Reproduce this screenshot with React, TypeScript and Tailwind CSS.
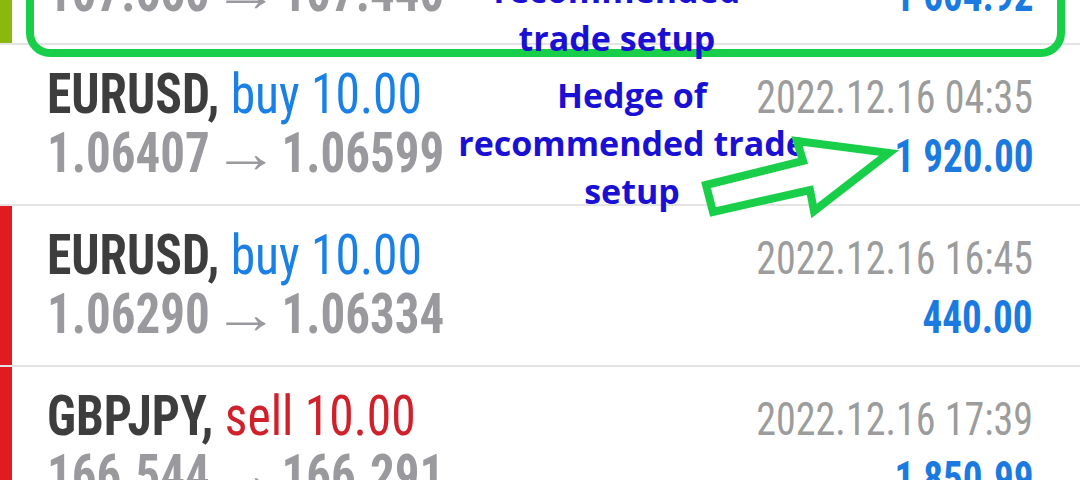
import React from 'react'

type Deal = {
  stripe: string
  symbol: string
  side: 'buy' | 'sell'
  volume: string
  open: string
  close: string
  time: string
  profit: string
}

const deals: Deal[] = [
  {
    stripe: 'bg-[#8ab80c]',
    symbol: 'USDJPY',
    side: 'sell',
    volume: '10.00',
    open: '107.660',
    close: '107.440',
    time: '2022.12.15 21:08',
    profit: '1 604.92',
  },
  {
    stripe: 'bg-white',
    symbol: 'EURUSD',
    side: 'buy',
    volume: '10.00',
    open: '1.06407',
    close: '1.06599',
    time: '2022.12.16 04:35',
    profit: '1 920.00',
  },
  {
    stripe: 'bg-[#e01b22]',
    symbol: 'EURUSD',
    side: 'buy',
    volume: '10.00',
    open: '1.06290',
    close: '1.06334',
    time: '2022.12.16 16:45',
    profit: '440.00',
  },
  {
    stripe: 'bg-[#e01b22]',
    symbol: 'GBPJPY',
    side: 'sell',
    volume: '10.00',
    open: '166.544',
    close: '166.291',
    time: '2022.12.16 17:39',
    profit: '1 850.99',
  },
]

// no condensed Roboto on the box, so squeeze the regular one
function DealRow({ deal }: { deal: Deal }) {
  return (
    <div className="flex h-[161px] border-b-2 border-[#e4e4e4]">
      <div className={`w-3 shrink-0 ${deal.stripe}`} />
      <div className="flex flex-1 flex-col justify-center pl-[35px] pr-[47px] font-['Roboto_Condensed',Roboto,sans-serif]">
        <div className="flex items-baseline justify-between leading-[56px]">
          <div className="inline-block origin-left scale-x-[0.885] text-[56px] leading-[56px] whitespace-nowrap">
            <span className="font-bold text-[#3d3d3d]">{deal.symbol},</span>{' '}
            <span className={deal.side === 'buy' ? 'text-[#1a80e6]' : 'text-[#d0202a]'}>
              {deal.side} {deal.volume}
            </span>
          </div>
          <div className="inline-block origin-right scale-x-[0.87] text-[46px] leading-[56px] text-[#9c9c9c] whitespace-nowrap">
            {deal.time}
          </div>
        </div>
        <div className="flex items-baseline justify-between leading-[56px]">
          <div className="inline-block origin-left scale-x-[0.875] text-[56px] leading-[56px] font-bold text-[#9a9a9e] whitespace-nowrap">
            {deal.open} <span className="inline-block scale-x-[1.35]">→</span> {deal.close}
          </div>
          <div className="inline-block origin-right scale-x-[0.85] text-[46px] leading-[56px] font-bold text-[#1a7ae0] whitespace-nowrap">
            {deal.profit}
          </div>
        </div>
      </div>
    </div>
  )
}

export default function App() {
  return (
    <div className="relative h-[480px] w-[1080px] overflow-hidden bg-white">
      <div className="-mt-[116px]">
        {deals.map((d, i) => (
          <DealRow key={i} deal={d} />
        ))}
      </div>

      {/* green highlight box round the first deal */}
      <div className="absolute left-[26px] top-[-40px] h-[97px] w-[1039px] rounded-[24px] border-8 border-[#19cf4a]" />

      {/* annotations */}
      <div className="absolute left-[417px] top-[-34px] w-[400px] text-center font-['Open_Sans',sans-serif] text-[34px] font-bold leading-[48px] text-[#1a10d4]">
        <div>recommended</div>
        <div>trade setup</div>
      </div>
      <div className="absolute left-[432px] top-[71px] w-[400px] text-center font-['Open_Sans',sans-serif] text-[34px] font-bold leading-[48px] text-[#1a10d4]">
        <div>Hedge of</div>
        <div>recommended trade</div>
        <div>setup</div>
      </div>

      <svg className="absolute left-0 top-0" width="1080" height="480" viewBox="0 0 1080 480">
        <polygon
          points="706,185 803,161 797,141 889,153 814,211 810,190 713,212"
          fill="white"
          stroke="#19cf4a"
          strokeWidth="8"
          strokeLinejoin="miter"
        />
      </svg>
    </div>
  )
}
